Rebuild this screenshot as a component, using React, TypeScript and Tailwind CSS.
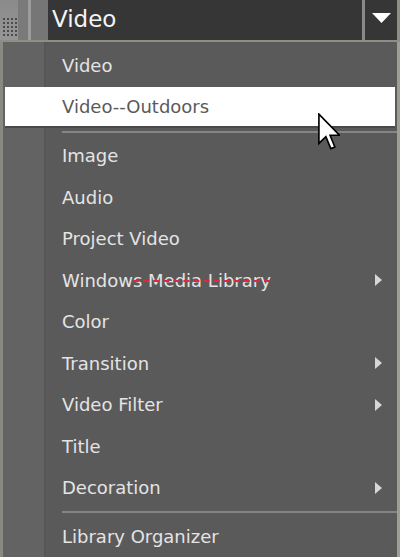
import React from "react";

interface MenuEntry {
	label: string;
	sub?: boolean;
	active?: boolean;
	sepAfter?: boolean;
	strike?: boolean;
}

const entries: MenuEntry[] = [
	{label: "Video"},
	{label: "Video--Outdoors", active: true, sepAfter: true},
	{label: "Image"},
	{label: "Audio"},
	{label: "Project Video"},
	{label: "Windows Media Library", sub: true, strike: true},
	{label: "Color"},
	{label: "Transition", sub: true},
	{label: "Video Filter", sub: true},
	{label: "Title"},
	{label: "Decoration", sub: true, sepAfter: true},
	{label: "Library Organizer"},
];

const font = "font-['DejaVu_Sans',_'Liberation_Sans',_sans-serif]";

const SubArrow = () => (
	<svg width="8" height="12" viewBox="0 0 8 12" className="absolute left-[375px] top-1/2 -translate-y-1/2">
		<polygon points="0,0 7,6 0,12" fill="#d6d6d6" />
	</svg>
);

const Cursor = () => (
	<svg
		width="22"
		height="38"
		viewBox="0 0 12 20.5"
		className="absolute left-[318px] top-[113px]"
	>
		<path
			d="M0.5,0.5 L0.5,16.5 L4.3,12.8 L7,19.3 L9.2,18.4 L6.6,12 L11.7,12 Z"
			fill="#ffffff"
			stroke="#000000"
			strokeWidth="0.9"
			strokeLinejoin="miter"
		/>
	</svg>
);

const Grip = () => (
	<div className="grid grid-cols-4 gap-[2px] mt-[18px] ml-[3px] w-fit">
		{Array.from({length: 20}).map((_, i) => (
			<span key={i} className="w-[2px] h-[2px] bg-[#4c4c4c]" />
		))}
	</div>
);

const App: React.FC = () => {
	return (
		<div className={`relative w-[400px] h-[557px] overflow-hidden bg-[#5a5a5a] ${font}`}>
			{/* top combo bar */}
			<div className="flex h-[42px] border-b-[2px] border-[#8e8e86]">
				<div className="flex w-[48px] shrink-0">
					<div className="w-[18px] bg-[linear-gradient(to_bottom,#8a8a8a,#969696)]">
						<Grip />
					</div>
					<div className="w-[10px] bg-[#7a7a7a]" />
					<div className="w-[3px] bg-[#9c9c9c]" />
					<div className="w-[17px] bg-[#767676]" />
				</div>
				<div className="flex-1 bg-[#363636] flex items-center pl-[4px]">
					<span className="text-[23px] leading-none text-[#f4f4f4] -mt-[2px]">Video</span>
				</div>
				<div className="w-[3px] bg-[#8a8a8a]" />
				<div className="w-[32px] bg-[#363636] flex items-center justify-center">
					<svg width="19" height="10" viewBox="0 0 19 10" className="-mt-[4px]">
						<polygon points="0,0 19,0 9.5,10" fill="#ffffff" />
					</svg>
				</div>
				<div className="w-[3px] bg-[#8e8e86]" />
			</div>

			{/* menu */}
			<div className="h-[515px] pt-[3px] border-r-[3px] border-[#9e9d96] bg-[linear-gradient(to_right,#8a8a82_0_3px,#636363_3px_44px,#565656_44px_46px,#5a5a5a_46px)]">
				{entries.map((e) => (
					<React.Fragment key={e.label}>
						{e.active ? (
							<div className="ml-[5px] mr-[2px] h-[41.5px] bg-white flex items-center pl-[57px] border-b-[2px] border-[#4a4a4a]">
								<span className="text-[18px] text-[#5a5a5a]">{e.label}</span>
							</div>
						) : (
							<div className="relative h-[41.5px] flex items-center pl-[62px]">
								<span className="text-[18px] text-[#e4e4e4]">{e.label}</span>
								{e.strike && (
									<span className="absolute left-[133px] top-[20px] w-[137px] border-t-[2px] border-dashed border-[#e0283c]" />
								)}
								{e.sub && <SubArrow />}
							</div>
						)}
						{e.sepAfter && (
							<div className="h-[7px] flex items-center pl-[62px]">
								<div className="h-[2px] w-full bg-[#858585]" />
							</div>
						)}
					</React.Fragment>
				))}
			</div>

			<Cursor />
		</div>
	);
};

export default App;
